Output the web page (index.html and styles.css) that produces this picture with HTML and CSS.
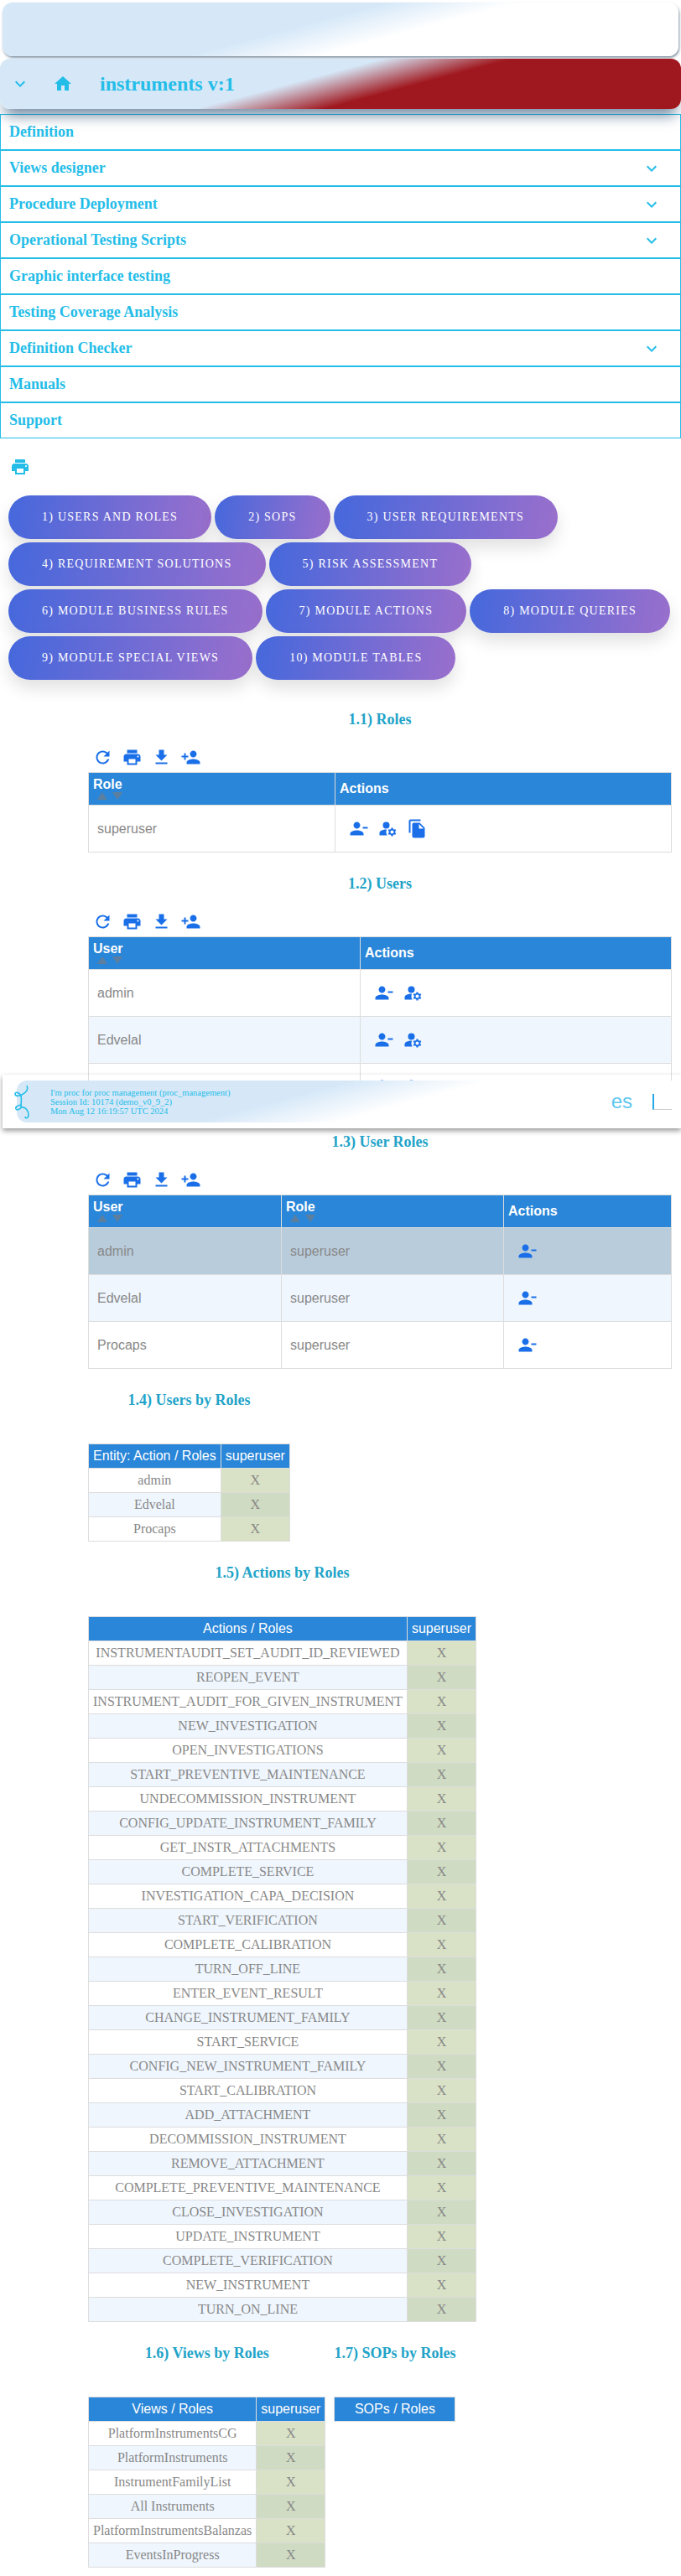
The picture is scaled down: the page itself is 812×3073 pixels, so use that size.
FILE: index.html
```html
<!DOCTYPE html>
<html lang="en">

<head>
    <meta charset="UTF-8">
    <meta name="viewport" content="width=device-width, initial-scale=1.0">
    <title>instruments v:1</title>

    <link rel="stylesheet" href="styles.css">
</head>

<body>

    <!-- Icon sprite -->
    <svg class="sprite" xmlns="http://www.w3.org/2000/svg">
        <symbol id="i-down" viewBox="0 0 24 24"><path d="M7.41 8.59L12 13.17l4.59-4.58L18 10l-6 6-6-6z"/></symbol>
        <symbol id="i-home" viewBox="0 0 24 24"><path d="M10 20v-6h4v6h5v-8h3L12 3 2 12h3v8z"/></symbol>
        <symbol id="i-print" viewBox="0 0 24 24"><path d="M19 8H5c-1.66 0-3 1.34-3 3v6h4v4h12v-4h4v-6c0-1.66-1.34-3-3-3zm-3 11H8v-5h8v5zm3-7c-.55 0-1-.45-1-1s.45-1 1-1 1 .45 1 1-.45 1-1 1zm-1-9H6v4h12V3z"/></symbol>
        <symbol id="i-refresh" viewBox="0 0 24 24"><path d="M17.65 6.35C16.2 4.9 14.21 4 12 4c-4.42 0-7.99 3.58-7.99 8s3.57 8 7.99 8c3.73 0 6.84-2.55 7.73-6h-2.08c-.82 2.33-3.04 4-5.65 4-3.31 0-6-2.69-6-6s2.69-6 6-6c1.66 0 3.14.69 4.22 1.78L13 11h7V4l-2.35 2.35z"/></symbol>
        <symbol id="i-download" viewBox="0 0 24 24"><path d="M19 9h-4V3H9v6H5l7 7 7-7zM5 18v2h14v-2H5z"/></symbol>
        <symbol id="i-add" viewBox="0 0 24 24"><path d="M15 12c2.21 0 4-1.79 4-4s-1.79-4-4-4-4 1.79-4 4 1.79 4 4 4zm-9-2V7H4v3H1v2h3v3h2v-3h3v-2H6zm9 4c-2.67 0-8 1.34-8 4v2h16v-2c0-2.66-5.33-4-8-4z"/></symbol>
        <symbol id="i-remove" viewBox="0 0 24 24"><path d="M14 8c0-2.21-1.79-4-4-4S6 5.79 6 8s1.79 4 4 4 4-1.79 4-4zm3 2v2h6v-2h-6zM2 18v2h16v-2c0-2.66-5.33-4-8-4s-8 1.34-8 4z"/></symbol>
        <symbol id="i-manage" viewBox="0 0 24 24"><circle cx="10" cy="8" r="4"/><path d="M10.67 13.02c-.22-.01-.44-.02-.67-.02-2.42 0-4.68.67-6.61 1.82-.88.52-1.39 1.5-1.39 2.53V20h9.26c-.79-1.13-1.26-2.51-1.26-4 0-1.07.25-2.07.67-2.98z"/><path d="M20.75 16c0-.22-.03-.42-.06-.63l1.14-1.01-1-1.73-1.45.49c-.32-.27-.68-.48-1.08-.63L18 11h-2l-.3 1.49c-.4.15-.76.36-1.08.63l-1.45-.49-1 1.73 1.14 1.01c-.03.21-.06.41-.06.63s.03.42.06.63l-1.14 1.01 1 1.73 1.45-.49c.32.27.68.48 1.08.63L16 21h2l.3-1.49c.4-.15.76-.36 1.08-.63l1.45.49 1-1.73-1.14-1.01c.03-.21.06-.41.06-.63zM17 18c-1.1 0-2-.9-2-2s.9-2 2-2 2 .9 2 2-.9 2-2 2z"/></symbol>
        <symbol id="i-copy" viewBox="0 0 24 24"><path d="M16 1H4c-1.1 0-2 .9-2 2v14h2V3h12V1zm-1 4l6 6v10c0 1.1-.9 2-2 2H7.99C6.89 23 6 22.1 6 21l.01-14c0-1.1.89-2 1.99-2h7zm-1 7h5.5L14 6.5V12z"/></symbol>
    </svg>

    <!-- Top bars -->
    <div class="top-banner"></div>
    <header class="app-bar">
        <svg class="icon app-chevron"><use href="#i-down"/></svg>
        <svg class="icon app-home"><use href="#i-home"/></svg>
        <h1 class="app-title">instruments v:1</h1>
    </header>

    <!-- Side menu -->
    <nav class="menu">
        <div class="menu-item">Definition</div>
        <div class="menu-item">Views designer <svg class="icon"><use href="#i-down"/></svg></div>
        <div class="menu-item">Procedure Deployment <svg class="icon"><use href="#i-down"/></svg></div>
        <div class="menu-item">Operational Testing Scripts <svg class="icon"><use href="#i-down"/></svg></div>
        <div class="menu-item">Graphic interface testing</div>
        <div class="menu-item">Testing Coverage Analysis</div>
        <div class="menu-item">Definition Checker <svg class="icon"><use href="#i-down"/></svg></div>
        <div class="menu-item">Manuals</div>
        <div class="menu-item">Support</div>
    </nav>

    <svg class="icon page-print"><use href="#i-print"/></svg>

    <!-- Chapter buttons -->
    <div class="chapters">
        <button type="button" class="chapter-btn">1) Users and Roles</button>
        <button type="button" class="chapter-btn">2) SOPs</button>
        <button type="button" class="chapter-btn">3) User Requirements</button>
        <button type="button" class="chapter-btn">4) Requirement Solutions</button>
        <button type="button" class="chapter-btn">5) Risk Assessment</button>
        <button type="button" class="chapter-btn">6) Module Business Rules</button>
        <button type="button" class="chapter-btn">7) Module Actions</button>
        <button type="button" class="chapter-btn">8) Module Queries</button>
        <button type="button" class="chapter-btn">9) Module Special Views</button>
        <button type="button" class="chapter-btn">10) Module Tables</button>
    </div>

    <!-- 1.1 Roles -->
    <section class="section">
        <h2 class="section-title">1.1) Roles</h2>
        <div class="toolbar">
            <svg class="icon"><use href="#i-refresh"/></svg>
            <svg class="icon"><use href="#i-print"/></svg>
            <svg class="icon"><use href="#i-download"/></svg>
            <svg class="icon"><use href="#i-add"/></svg>
        </div>
        <table class="data-table">
            <colgroup><col class="col-role"><col></colgroup>
            <thead>
                <tr>
                    <th>Role<div class="sort"><i class="sort-up"></i><i class="sort-down"></i></div></th>
                    <th>Actions</th>
                </tr>
            </thead>
            <tbody>
                <tr>
                    <td>superuser</td>
                    <td class="actions">
                        <svg class="icon"><use href="#i-remove"/></svg>
                        <svg class="icon"><use href="#i-manage"/></svg>
                        <svg class="icon"><use href="#i-copy"/></svg>
                    </td>
                </tr>
            </tbody>
        </table>
    </section>

    <!-- 1.2 Users -->
    <section class="section">
        <h2 class="section-title">1.2) Users</h2>
        <div class="toolbar">
            <svg class="icon"><use href="#i-refresh"/></svg>
            <svg class="icon"><use href="#i-print"/></svg>
            <svg class="icon"><use href="#i-download"/></svg>
            <svg class="icon"><use href="#i-add"/></svg>
        </div>
        <table class="data-table">
            <colgroup><col class="col-user"><col></colgroup>
            <thead>
                <tr>
                    <th>User<div class="sort"><i class="sort-up"></i><i class="sort-down"></i></div></th>
                    <th>Actions</th>
                </tr>
            </thead>
            <tbody>
                <tr>
                    <td>admin</td>
                    <td class="actions">
                        <svg class="icon"><use href="#i-remove"/></svg>
                        <svg class="icon"><use href="#i-manage"/></svg>
                    </td>
                </tr>
                <tr>
                    <td>Edvelal</td>
                    <td class="actions">
                        <svg class="icon"><use href="#i-remove"/></svg>
                        <svg class="icon"><use href="#i-manage"/></svg>
                    </td>
                </tr>
                <tr>
                    <td>Procaps</td>
                    <td class="actions">
                        <svg class="icon"><use href="#i-remove"/></svg>
                        <svg class="icon"><use href="#i-manage"/></svg>
                    </td>
                </tr>
            </tbody>
        </table>
    </section>

    <!-- 1.3 User Roles -->
    <section class="section">
        <h2 class="section-title">1.3) User Roles</h2>
        <div class="toolbar">
            <svg class="icon"><use href="#i-refresh"/></svg>
            <svg class="icon"><use href="#i-print"/></svg>
            <svg class="icon"><use href="#i-download"/></svg>
            <svg class="icon"><use href="#i-add"/></svg>
        </div>
        <table class="data-table">
            <colgroup><col class="col-ur-user"><col class="col-ur-role"><col></colgroup>
            <thead>
                <tr>
                    <th>User<div class="sort"><i class="sort-up"></i><i class="sort-down"></i></div></th>
                    <th>Role<div class="sort"><i class="sort-up"></i><i class="sort-down"></i></div></th>
                    <th>Actions</th>
                </tr>
            </thead>
            <tbody>
                <tr class="hovered">
                    <td>admin</td>
                    <td>superuser</td>
                    <td class="actions"><svg class="icon"><use href="#i-remove"/></svg></td>
                </tr>
                <tr>
                    <td>Edvelal</td>
                    <td>superuser</td>
                    <td class="actions"><svg class="icon"><use href="#i-remove"/></svg></td>
                </tr>
                <tr>
                    <td>Procaps</td>
                    <td>superuser</td>
                    <td class="actions"><svg class="icon"><use href="#i-remove"/></svg></td>
                </tr>
            </tbody>
        </table>
    </section>

    <!-- 1.4 Users by Roles -->
    <section class="matrix-row">
        <div class="matrix-col">
            <h2 class="section-title matrix-title">1.4) Users by Roles</h2>
            <table class="matrix">
                <thead>
                    <tr><th>Entity: Action / Roles</th><th>superuser</th></tr>
                </thead>
                <tbody>
                    <tr><td>admin</td><td class="mark">X</td></tr>
                    <tr><td>Edvelal</td><td class="mark">X</td></tr>
                    <tr><td>Procaps</td><td class="mark">X</td></tr>
                </tbody>
            </table>
        </div>
    </section>

    <!-- 1.5 Actions by Roles -->
    <section class="matrix-row">
        <div class="matrix-col">
            <h2 class="section-title matrix-title">1.5) Actions by Roles</h2>
            <table class="matrix">
                <thead>
                    <tr><th>Actions / Roles</th><th>superuser</th></tr>
                </thead>
                <tbody>
                    <tr><td>INSTRUMENTAUDIT_SET_AUDIT_ID_REVIEWED</td><td class="mark">X</td></tr>
                    <tr><td>REOPEN_EVENT</td><td class="mark">X</td></tr>
                    <tr><td>INSTRUMENT_AUDIT_FOR_GIVEN_INSTRUMENT</td><td class="mark">X</td></tr>
                    <tr><td>NEW_INVESTIGATION</td><td class="mark">X</td></tr>
                    <tr><td>OPEN_INVESTIGATIONS</td><td class="mark">X</td></tr>
                    <tr><td>START_PREVENTIVE_MAINTENANCE</td><td class="mark">X</td></tr>
                    <tr><td>UNDECOMMISSION_INSTRUMENT</td><td class="mark">X</td></tr>
                    <tr><td>CONFIG_UPDATE_INSTRUMENT_FAMILY</td><td class="mark">X</td></tr>
                    <tr><td>GET_INSTR_ATTACHMENTS</td><td class="mark">X</td></tr>
                    <tr><td>COMPLETE_SERVICE</td><td class="mark">X</td></tr>
                    <tr><td>INVESTIGATION_CAPA_DECISION</td><td class="mark">X</td></tr>
                    <tr><td>START_VERIFICATION</td><td class="mark">X</td></tr>
                    <tr><td>COMPLETE_CALIBRATION</td><td class="mark">X</td></tr>
                    <tr><td>TURN_OFF_LINE</td><td class="mark">X</td></tr>
                    <tr><td>ENTER_EVENT_RESULT</td><td class="mark">X</td></tr>
                    <tr><td>CHANGE_INSTRUMENT_FAMILY</td><td class="mark">X</td></tr>
                    <tr><td>START_SERVICE</td><td class="mark">X</td></tr>
                    <tr><td>CONFIG_NEW_INSTRUMENT_FAMILY</td><td class="mark">X</td></tr>
                    <tr><td>START_CALIBRATION</td><td class="mark">X</td></tr>
                    <tr><td>ADD_ATTACHMENT</td><td class="mark">X</td></tr>
                    <tr><td>DECOMMISSION_INSTRUMENT</td><td class="mark">X</td></tr>
                    <tr><td>REMOVE_ATTACHMENT</td><td class="mark">X</td></tr>
                    <tr><td>COMPLETE_PREVENTIVE_MAINTENANCE</td><td class="mark">X</td></tr>
                    <tr><td>CLOSE_INVESTIGATION</td><td class="mark">X</td></tr>
                    <tr><td>UPDATE_INSTRUMENT</td><td class="mark">X</td></tr>
                    <tr><td>COMPLETE_VERIFICATION</td><td class="mark">X</td></tr>
                    <tr><td>NEW_INSTRUMENT</td><td class="mark">X</td></tr>
                    <tr><td>TURN_ON_LINE</td><td class="mark">X</td></tr>
                </tbody>
            </table>
        </div>
    </section>

    <!-- 1.6 Views by Roles / 1.7 SOPs by Roles -->
    <section class="matrix-row">
        <div class="matrix-col">
            <h2 class="section-title matrix-title">1.6) Views by Roles</h2>
            <table class="matrix">
                <thead>
                    <tr><th>Views / Roles</th><th>superuser</th></tr>
                </thead>
                <tbody>
                    <tr><td>PlatformInstrumentsCG</td><td class="mark">X</td></tr>
                    <tr><td>PlatformInstruments</td><td class="mark">X</td></tr>
                    <tr><td>InstrumentFamilyList</td><td class="mark">X</td></tr>
                    <tr><td>All Instruments</td><td class="mark">X</td></tr>
                    <tr><td>PlatformInstrumentsBalanzas</td><td class="mark">X</td></tr>
                    <tr><td>EventsInProgress</td><td class="mark">X</td></tr>
                </tbody>
            </table>
        </div>
        <div class="matrix-col">
            <h2 class="section-title matrix-title">1.7) SOPs by Roles</h2>
            <table class="matrix">
                <thead>
                    <tr><th>SOPs / Roles</th></tr>
                </thead>
            </table>
        </div>
    </section>

    <!-- Session bar, floats over the page -->
    <div class="session-bar">
        <div class="session-inner">
            <svg class="session-logo" viewBox="0 0 20 41">
                <path d="M15 1C17 5 15 9 9 12C5 14 1 14 1 11C1 8 6 9 8 13C9 17 8 22 8 27"/>
                <path d="M8 24C4 25 1 26 2 29C3 31 7 29 9 27C13 26 17 31 17 36C17 40 13 41 13 38"/>
            </svg>
            <div class="session-text">
                I'm proc for proc management (proc_management)<br>
                Session Id: 10174 (demo_v0_9_2)<br>
                Mon Aug 12 16:19:57 UTC 2024
            </div>
            <span class="session-lang">es</span>
            <span class="session-field"></span>
        </div>
    </div>

</body>

</html>
```

FILE: styles.css
```css
/* General Styles */
body {
    margin: 0;
    padding-bottom: 11px;
    font-family: "Liberation Serif", "Times New Roman", serif;
    background: #fff;
    position: relative;
}

.sprite {
    display: none;
}

.icon {
    width: 24px;
    height: 24px;
    fill: currentColor;
    flex-shrink: 0;
}

/* Top Bars */
.top-banner {
    height: 64px;
    margin: 3px 3px 3px;
    border-radius: 12px;
    background: linear-gradient(165deg, #d6e8f8 44%, #fff 59%);
    box-shadow: 1px 2px 3px rgba(30, 60, 90, 0.55);
}

.app-bar {
    position: relative;
    z-index: 2;
    display: flex;
    align-items: center;
    height: 60px;
    padding-left: 12px;
    border-radius: 12px;
    color: #24bde8;
    background: linear-gradient(165deg, #d6e8f8 44%, #a0181f 59%);
    box-shadow: 0 14px 16px -6px rgba(25, 65, 105, 0.6);
}

.app-home {
    margin-left: 27px;
}

.app-title {
    margin: 0 0 0 32px;
    font-size: 24px;
    font-weight: bold;
}

/* Menu */
.menu {
    margin-top: 6px;
}

.menu-item {
    display: flex;
    justify-content: space-between;
    align-items: center;
    box-sizing: border-box;
    height: 43px;
    padding: 0 22px 0 10px;
    border: 1px solid #24bde8;
    font-size: 18px;
    font-weight: bold;
    color: #24bde8;
}

.page-print {
    display: block;
    margin: 22px 0 22px 12px;
    color: #24bde8;
}

/* Chapter Buttons */
.chapters {
    display: flex;
    flex-wrap: wrap;
    gap: 4px;
    padding: 0 10px;
    margin-bottom: 37px;
}

.chapter-btn {
    height: 52px;
    padding: 0 40px;
    border: none;
    border-radius: 26px;
    font-family: inherit;
    font-size: 14px;
    letter-spacing: 1.25px;
    text-transform: uppercase;
    color: #fff;
    background: linear-gradient(100deg, #4568dc, #9a6fcc);
    box-shadow: 0 10px 20px rgba(0, 0, 0, 0.12);
}

/* Sections */
.section {
    width: 696px;
    margin-left: 105px;
}

.section-title {
    margin: 27px 0 17px;
    font-size: 18px;
    line-height: 21px;
    font-weight: bold;
    text-align: center;
    color: #22a3c8;
}

.toolbar {
    display: flex;
    height: 35px;
    color: #1a6fe8;
}

.toolbar .icon {
    width: 35px;
    height: 35px;
    padding: 5.5px;
    box-sizing: border-box;
}

/* Data Tables */
.data-table {
    width: 100%;
    table-layout: fixed;
    border-collapse: collapse;
    font-family: "Liberation Sans", Arial, sans-serif;
    font-size: 16px;
}

.col-role {
    width: 294px;
}

.col-user {
    width: 324px;
}

.col-ur-user {
    width: 230px;
}

.col-ur-role {
    width: 265px;
}

.data-table th {
    height: 38px;
    padding: 0 5px;
    border: 1px solid #ddd;
    text-align: left;
    color: #fff;
    background: #2a86d8;
}

.sort {
    display: flex;
    gap: 6px;
    height: 10px;
    padding-left: 5px;
}

.sort-up,
.sort-down {
    width: 0;
    height: 0;
    border-left: 6.5px solid transparent;
    border-right: 6.5px solid transparent;
}

.sort-up {
    border-bottom: 9px solid #5c7f9f;
}

.sort-down {
    border-top: 9px solid #5c7f9f;
}

.data-table td {
    height: 35px;
    padding: 10px;
    border: 1px solid #ddd;
    color: #888;
}

.data-table td.actions {
    padding: 10px;
    color: #1a6fe8;
    font-size: 0;
}

.actions .icon {
    width: 35px;
    height: 35px;
    padding: 5.5px;
    box-sizing: border-box;
}

.data-table tbody tr:nth-child(even) {
    background: #eff6fe;
}

.data-table tbody tr.hovered {
    background: #b9ccdc;
}

/* Matrix Tables */
.matrix-row {
    display: flex;
    align-items: flex-start;
    gap: 10px;
    margin-left: 105px;
}

.matrix-col {
    width: max-content;
}

.matrix-title {
    margin-bottom: 41px;
}

.matrix {
    width: 100%;
    border-collapse: collapse;
    font-size: 16px;
    color: #888;
}

.matrix th {
    padding: 5px;
    border: 1px solid #ddd;
    font-family: "Liberation Sans", Arial, sans-serif;
    font-weight: normal;
    color: #fff;
    background: #2a86d8;
}

.matrix td {
    padding: 5px;
    border: 1px solid #ddd;
    text-align: center;
}

.matrix tbody tr:nth-child(even) td {
    background: #eff6fe;
}

.matrix td.mark {
    background: #d9e2c6;
}

.matrix tbody tr:nth-child(even) td.mark {
    background: #cfdbc2;
}

/* Session Bar */
.session-bar {
    position: absolute;
    top: 1282px;
    left: 3px;
    right: 0;
    z-index: 3;
    box-sizing: border-box;
    height: 64px;
    padding: 7px 0 0 17px;
    /* top strip lets the table behind show through */
    background: linear-gradient(transparent 7px, #fff 7px);
    box-shadow: 0 3px 6px rgba(0, 0, 0, 0.4);
}

.session-inner {
    display: flex;
    align-items: center;
    height: 50px;
    padding-right: 11px;
    border-radius: 12px 0 0 12px;
    background: linear-gradient(165deg, #d6e8f8 41%, #fff 58%);
}

.session-logo {
    width: 20px;
    height: 41px;
    margin-left: -3px;
    fill: none;
    stroke: #24bde8;
    stroke-width: 1.6;
}

.session-text {
    flex: 1;
    margin-left: 23px;
    font-size: 10.5px;
    line-height: 11px;
    color: #24bde8;
}

.session-lang {
    margin-right: 24px;
    font-family: "Liberation Sans", Arial, sans-serif;
    font-size: 24px;
    color: #5cc6f2;
}

.session-field {
    box-sizing: border-box;
    width: 23px;
    height: 19px;
    border-left: 2px solid #24a8e8;
    border-bottom: 1px solid #ccc;
}
```
